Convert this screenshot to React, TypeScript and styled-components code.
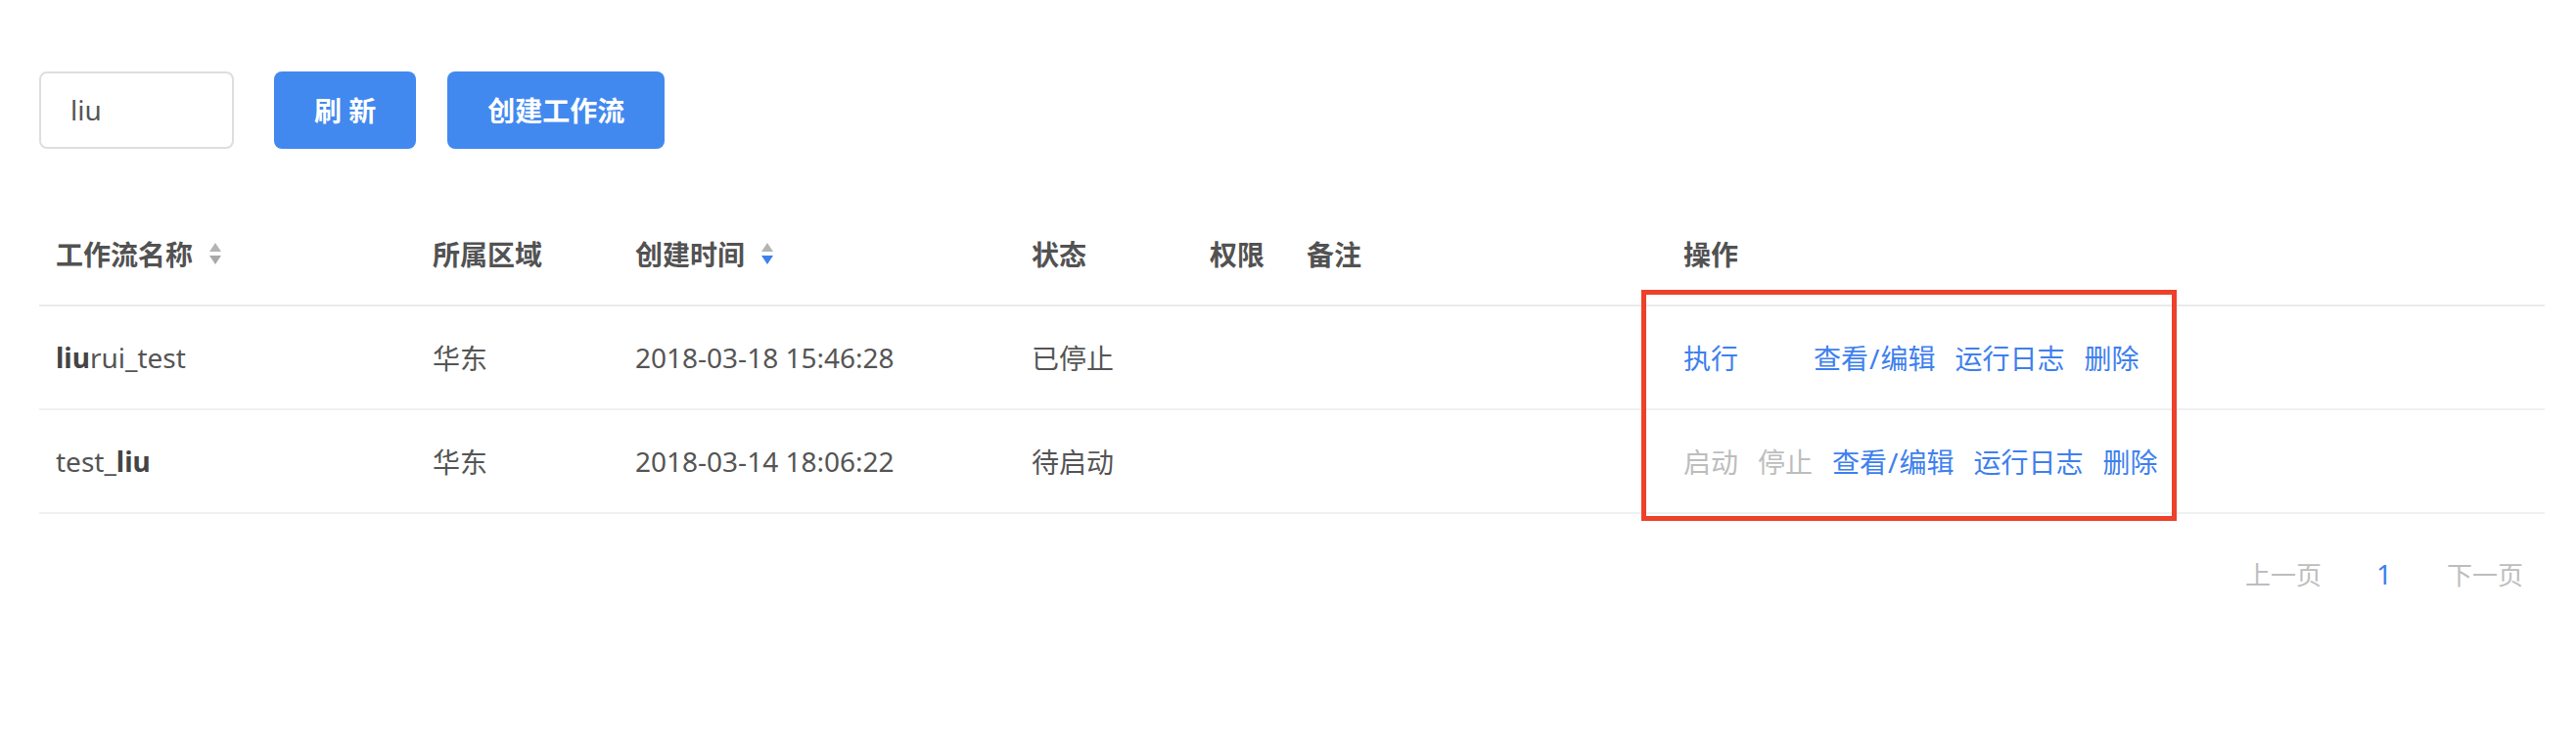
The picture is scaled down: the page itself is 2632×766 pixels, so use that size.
import styled, { createGlobalStyle } from "styled-components";

const GlobalStyle = createGlobalStyle`
  html, body {
    margin: 0;
    padding: 0;
    background: #fff;
  }
  body {
    font-family: "Noto Sans", "Noto Sans CJK SC", sans-serif;
    color: #555;
  }
`;

const COLUMNS = "385px 207px 405px 182px 99px 385px 1fr";

interface Workflow {
  prefix: string;
  match: string;
  suffix: string;
  region: string;
  createdAt: string;
  status: string;
  running: boolean;
}

const workflows: Workflow[] = [
  {
    prefix: "",
    match: "liu",
    suffix: "rui_test",
    region: "华东",
    createdAt: "2018-03-18 15:46:28",
    status: "已停止",
    running: true,
  },
  {
    prefix: "test_",
    match: "liu",
    suffix: "",
    region: "华东",
    createdAt: "2018-03-14 18:06:22",
    status: "待启动",
    running: false,
  },
];

function SortIcon({ active }: { active?: "up" | "down" }) {
  return (
    <SortSvg width="14" height="22" viewBox="0 0 14 22">
      <polygon points="7,0 13,9 1,9" fill={active === "up" ? "#3e80ee" : "#b4b4b4"} />
      <polygon points="1,13 13,13 7,22" fill={active === "down" ? "#3e80ee" : "#a9a9a9"} />
    </SortSvg>
  );
}

function App() {
  return (
    <Page>
      <GlobalStyle />
      <Toolbar>
        <SearchInput defaultValue="liu" />
        <PrimaryButton>刷 新</PrimaryButton>
        <PrimaryButton>创建工作流</PrimaryButton>
      </Toolbar>

      <TableWrap>
        <HeaderRow>
          <HeadCell>
            工作流名称
            <SortIcon />
          </HeadCell>
          <HeadCell>所属区域</HeadCell>
          <HeadCell>
            创建时间
            <SortIcon active="down" />
          </HeadCell>
          <HeadCell>状态</HeadCell>
          <HeadCell>权限</HeadCell>
          <HeadCell>备注</HeadCell>
          <HeadCell>操作</HeadCell>
        </HeaderRow>

        {workflows.map((w) => (
          <BodyRow key={w.createdAt}>
            <Cell>
              {w.prefix}
              <Match>{w.match}</Match>
              {w.suffix}
            </Cell>
            <Cell>{w.region}</Cell>
            <Cell>{w.createdAt}</Cell>
            <Cell>{w.status}</Cell>
            <Cell />
            <Cell />
            <ActionCell>
              {w.running ? (
                <ActionLink $spaced>执行</ActionLink>
              ) : (
                <>
                  <ActionLink $disabled>启动</ActionLink>
                  <ActionLink $disabled>停止</ActionLink>
                </>
              )}
              <ActionLink>
                查看<Slash>/</Slash>编辑
              </ActionLink>
              <ActionLink>运行日志</ActionLink>
              <ActionLink>删除</ActionLink>
            </ActionCell>
          </BodyRow>
        ))}

        <Highlight />
      </TableWrap>

      <Pager>
        <PagerText>上一页</PagerText>
        <PageNumber>1</PageNumber>
        <PagerText>下一页</PagerText>
      </Pager>
    </Page>
  );
}

const Page = styled.div`
  padding: 72px 32px 0 40px;
`;

const Toolbar = styled.div`
  display: flex;
  align-items: center;
  gap: 32px;
  height: 80px;
`;

const SearchInput = styled.input`
  box-sizing: border-box;
  width: 199px;
  height: 79px;
  margin-right: 9px;
  padding: 0 30px;
  border: 2px solid #dcdee2;
  border-radius: 8px;
  font-family: inherit;
  font-size: 28px;
  color: #555;
  outline: none;
`;

const PrimaryButton = styled.button`
  height: 79px;
  padding: 0 41px;
  border: none;
  border-radius: 8px;
  background: #4289ef;
  color: #fff;
  font-family: inherit;
  font-size: 28px;
  font-weight: 700;
  cursor: pointer;
`;

const TableWrap = styled.div`
  position: relative;
  margin-top: 55px;
`;

const HeaderRow = styled.div`
  display: grid;
  grid-template-columns: ${COLUMNS};
  height: 104px;
  border-bottom: 2px solid #e8eaec;
`;

const BodyRow = styled(HeaderRow)`
  border-bottom-color: #eef0f3;
`;

const Cell = styled.div`
  display: flex;
  align-items: center;
  padding: 0 17px;
  font-size: 28px;
  color: #555;
  white-space: nowrap;
`;

const HeadCell = styled(Cell)`
  font-weight: 700;
  color: #525252;
`;

const SortSvg = styled.svg`
  margin-left: 16px;
`;

const Match = styled.b`
  font-weight: 700;
  color: #444;
`;

const ActionCell = styled(Cell)`
  gap: 20px;
`;

const ActionLink = styled.a<{ $disabled?: boolean; $spaced?: boolean }>`
  color: ${(p) => (p.$disabled ? "#bdbdbd" : "#3e80ee")};
  margin-right: ${(p) => (p.$spaced ? "57px" : "0")};
  cursor: ${(p) => (p.$disabled ? "not-allowed" : "pointer")};
`;

const Slash = styled.span`
  padding: 0 1px;
`;

const Highlight = styled.div`
  position: absolute;
  left: 1637px;
  top: 89px;
  width: 547px;
  height: 236px;
  box-sizing: border-box;
  border: 5px solid #ed4129;
  pointer-events: none;
`;

const Pager = styled.div`
  display: flex;
  justify-content: flex-end;
  align-items: baseline;
  gap: 56px;
  margin-top: 42px;
  padding-right: 22px;
`;

const PagerText = styled.span`
  font-size: 26px;
  color: #bdbdbd;
`;

const PageNumber = styled.span`
  font-size: 28px;
  color: #3e80ee;
`;

export default App;
